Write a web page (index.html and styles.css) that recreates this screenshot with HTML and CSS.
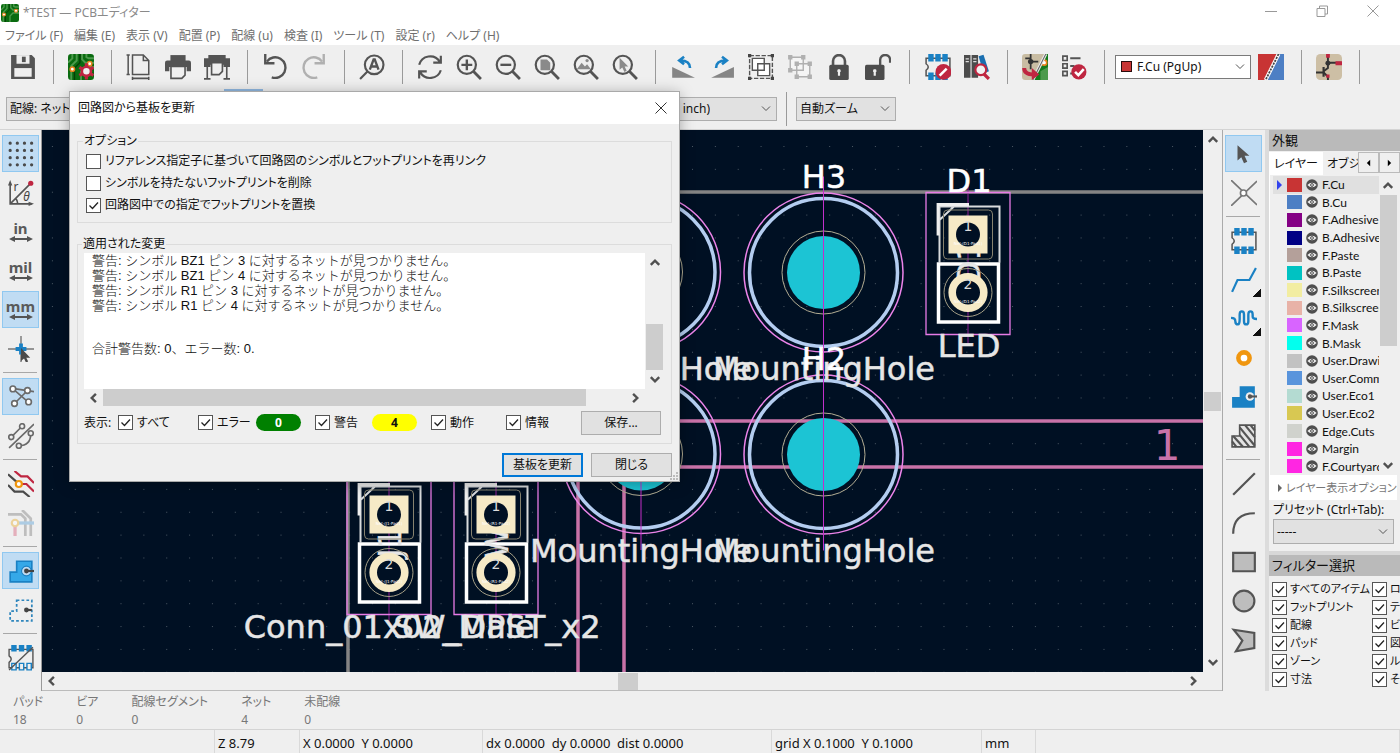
FILE: index.html
```html
<!DOCTYPE html>
<html lang="ja">
<head>
  <meta charset="UTF-8">
  <meta name="viewport" content="width=device-width, initial-scale=1.0">
  <title>*TEST — PCBエディター</title>
  <link rel="stylesheet" href="styles.css">
</head>
<body>
  <!-- shared symbols -->
  <svg class="defs" aria-hidden="true">
    <symbol id="board" viewBox="0 0 24 24">
      <rect width="24" height="24" rx="3" fill="#0a6b10"/>
      <path d="M8 0v6l-5 5v13M13 0v5l3 3h8M17 0v3l2 1h5M24 12h-8l-4 4v8M0 8l4-4V0" fill="none" stroke="#4c9a4c" stroke-width="1.8"/>
      <path d="M11 0v8l-5 5v11" fill="none" stroke="#053d08" stroke-width="1.2"/>
      <circle cx="4" cy="14" r="2" fill="#fff" stroke="#e8821c" stroke-width="1.4"/>
      <circle cx="20" cy="9" r="2" fill="#fff" stroke="#e8821c" stroke-width="1.4"/>
    </symbol>
    <symbol id="lens" viewBox="0 0 24 24">
      <circle cx="10" cy="10" r="8.4" fill="none" stroke="#545454" stroke-width="2"/>
      <path d="M16 16l7 7" stroke="#545454" stroke-width="2.6"/>
    </symbol>
    <symbol id="eye" viewBox="0 0 12 12">
      <circle cx="6" cy="6" r="5.8" fill="#4e4e4e"/>
      <path d="M1.4 6Q6 1.6 10.600 6Q6 10.400 1.4 6z" fill="#f0f0f0"/>
      <circle cx="6" cy="6" r="1.400" fill="#f0f0f0" stroke="#4e4e4e"/>
    </symbol>
    <symbol id="span" viewBox="0 0 24 6">
      <path d="M4 3h16" stroke="#545454" stroke-width="2"/>
      <path d="M0 3l6-3v6zM24 3l-6-3v6z" fill="#545454"/>
    </symbol>
    <symbol id="chip" viewBox="0 0 24 24">
      <path d="M1 4h22v16H1v-5q4-3 0-6z" fill="none" stroke="#545454" stroke-width="1.400"/>
      <path d="M3 0h5v7H3zM9.500 0h5v7h-5zM16 0h5v7h-5zM3 17h5v7H3zM9.500 17h5v7h-5zM16 17h5v7h-5z" fill="#1a81c4"/>
    </symbol>
    <symbol id="arrow" viewBox="0 0 24 24">
      <path d="M6 4v14l3.500-3 2.500 5.500 3-1.400-2.500-5.400H17z" fill="#545454"/>
    </symbol>
    <symbol id="chev" viewBox="0 0 10 10">
      <path d="M1.500 3L5 6.500 8.500 3" fill="none" stroke="#505050" stroke-width="2"/>
    </symbol>
  </svg>

  <div class="app">
    <header class="titlebar">
      <svg class="app-icon"><use href="#board"/></svg>
      <h1>*TEST — PCBエディター</h1>
      <div class="window-buttons">
        <button aria-label="最小化"><svg viewBox="0 0 12 12"><path d="M0 6.500h12"/></svg></button>
        <button aria-label="元に戻す"><svg viewBox="0 0 12 12"><path d="M1 3.500h8v8H1zM3.500 3.500V1h8v8H9"/></svg></button>
        <button aria-label="ウィンドウを閉じる"><svg viewBox="0 0 12 12"><path d="M.5.5l11 11M11.500.5l-11 11"/></svg></button>
      </div>
    </header>

    <nav class="menubar">
      <a href="#file">ファイル (F)</a>
      <a href="#edit">編集 (E)</a>
      <a href="#view">表示 (V)</a>
      <a href="#place">配置 (P)</a>
      <a href="#route">配線 (u)</a>
      <a href="#inspect">検査 (I)</a>
      <a href="#tools">ツール (T)</a>
      <a href="#prefs">設定 (r)</a>
      <a href="#help">ヘルプ (H)</a>
    </nav>

    <div class="toolbar">
      <button class="tool" aria-label="保存"><svg viewBox="0 0 24 24"><path d="M1 1h19l3 3v19H1z" fill="#545454"/><path d="M6 1h12v8H6z" fill="#efefef"/><path d="M11 2.500h3.500v5H11z" fill="#545454"/><path d="M4 13h16v8H4z" fill="#efefef"/></svg></button>
      <span class="sep"></span>
      <button class="tool" aria-label="基板の設定"><svg viewBox="0 0 24 24"><use href="#board"/><path d="M17 8.500v15M10.500 12.300l13 7.500M10.500 19.800l13-7.500" stroke="#bf2641" stroke-width="3"/><circle cx="17" cy="16" r="4.200" fill="#efefef" stroke="#bf2641" stroke-width="2.400"/></svg></button>
      <span class="sep"></span>
      <button class="tool" aria-label="ページ設定"><svg viewBox="0 0 24 24" fill="none" stroke="#545454" stroke-width="1.400"><path d="M6 1h10l5 5v13H6zM16 1v5h5"/><path d="M2 1v18M.5 1h3M.5 19h3M6 22.500h15M6 21v3M21 21v3"/></svg></button>
      <button class="tool" aria-label="印刷"><svg viewBox="0 0 24 24"><path d="M5 1h14v6H5z" fill="#545454"/><path d="M0 8q0-2 2-2h20q2 0 2 2v8h-4v-4H4v4H0z" fill="#545454"/><path d="M5.500 11.500h13v8l-3 3h-10z" fill="#efefef" stroke="#545454" stroke-width="1.500"/></svg></button>
      <button class="tool" aria-label="プロット"><svg viewBox="0 0 24 24"><path d="M4 1h16v3h4v8h-6v-2H6v2H0V4h4z" fill="#545454"/><path d="M7 8h10v8l-3 3H7z" fill="#efefef" stroke="#545454" stroke-width="1.500"/><path d="M3 11v12M21 11v12M0 23h6M18 23h6" stroke="#545454" stroke-width="1.500"/></svg></button>
      <span class="sep"></span>
      <button class="tool" aria-label="元に戻す操作"><svg viewBox="0 0 24 24"><path d="M4.500 7A9.500 9.500 0 1 1 9 21.500" fill="none" stroke="#545454" stroke-width="2.200"/><path d="M3 0v8.500h8.500" fill="none" stroke="#545454" stroke-width="2.200"/></svg></button>
      <button class="tool faded" aria-label="やり直し"><svg viewBox="0 0 24 24"><path d="M19.500 7A9.500 9.500 0 1 0 15 21.500" fill="none" stroke="#545454" stroke-width="2.200"/><path d="M21 0v8.500h-8.500" fill="none" stroke="#545454" stroke-width="2.200"/></svg></button>
      <span class="sep"></span>
      <button class="tool" aria-label="検索"><svg viewBox="0 0 24 24"><g fill="none" stroke="#545454" stroke-width="2"><circle cx="14" cy="10" r="8.600"/><path d="M8 16l-7 7"/><path d="M10 14.500L13.500 5h1L18 14.500M11 11.500h6" stroke-width="2.200"/></g></svg></button>
      <span class="sep"></span>
      <button class="tool" aria-label="再描画"><svg viewBox="0 0 24 24" fill="none" stroke="#545454" stroke-width="2"><path d="M2 10a10.500 10.500 0 0 1 19-3M22 1.500V8h-7M22 15a10.500 10.500 0 0 1-19 2M2 22.500V16h7"/></svg></button>
      <button class="tool" aria-label="拡大"><svg viewBox="0 0 24 24"><use href="#lens"/><path d="M5 10h10M10 5v10" stroke="#545454" stroke-width="2.200"/></svg></button>
      <button class="tool" aria-label="縮小"><svg viewBox="0 0 24 24"><use href="#lens"/><path d="M5 10h10" stroke="#545454" stroke-width="2.200"/></svg></button>
      <button class="tool" aria-label="ページに合わせる"><svg viewBox="0 0 24 24"><path d="M6 5h6l3 3v7H6z" fill="#8a8a8a"/><use href="#lens"/></svg></button>
      <button class="tool" aria-label="全体を表示"><svg viewBox="0 0 24 24"><path d="M3.500 14l4.500-6 3 3.500 2-2 3.500 4.500z" fill="#8a8a8a"/><circle cx="13" cy="6" r="1.500" fill="#8a8a8a"/><use href="#lens"/></svg></button>
      <button class="tool" aria-label="選択部を拡大"><svg viewBox="0 0 24 24"><path d="M7 3.500v11l2.500-2 2 4 2-1-1.800-4H15z" fill="#8a8a8a"/><use href="#lens"/></svg></button>
      <span class="sep"></span>
      <button class="tool" aria-label="反時計回りに回転"><svg viewBox="0 0 24 24"><path d="M2 12v10h21z" fill="#858585"/><path d="M18.500 13q0-7-9-7M13 2.500L8.500 6 13 9.500" fill="none" stroke="#1a81c4" stroke-width="2.400"/></svg></button>
      <button class="tool" aria-label="時計回りに回転"><svg viewBox="0 0 24 24"><path d="M23 12v10H2z" fill="#858585"/><path d="M6.500 13q0-7 9-7M12 2.500L16.500 6 12 9.500" fill="none" stroke="#1a81c4" stroke-width="2.400"/></svg></button>
      <button class="tool" aria-label="グループ化"><svg viewBox="0 0 24 24"><path d="M1.500 1.500h21v21h-21z" fill="none" stroke="#545454" stroke-width="1.300" stroke-dasharray="4 1.500"/><path d="M0 0h3v3H0zM21 0h3v3h-3zM0 21h3v3H0zM21 21h3v3h-3z" fill="#444"/><path d="M4 4h11v11H4zM9 9h11v11H9z" fill="#fff" stroke="#545454" stroke-width="1.300"/></svg></button>
      <button class="tool faded" aria-label="グループ解除"><svg viewBox="0 0 24 24"><path d="M3 3h12v12H3zM9 9h12v12H9z" fill="#fff" stroke="#545454" stroke-width="1.300"/><path d="M1 1h4v4H1zM13 1h4v4h-4zM1 13h4v4H1zM7 7h4v4H7zM19 7h4v4h-4zM7 19h4v4H7zM19 19h4v4h-4z" fill="#545454"/></svg></button>
      <button class="tool" aria-label="ロック"><svg viewBox="0 0 24 24"><path d="M6.500 11V6.500a5.500 5.500 0 0 1 11 0V11" fill="none" stroke="#545454" stroke-width="2.400"/><rect x="3" y="10" width="18" height="14" rx="1.500" fill="#4c4c4c"/><path d="M12 14v6M10.500 15.500h3" stroke="#efefef" stroke-width="2"/></svg></button>
      <button class="tool" aria-label="ロック解除"><svg viewBox="0 0 24 24"><path d="M14 11V5.500a4.600 4.600 0 0 1 9.200 0V8" fill="none" stroke="#545454" stroke-width="2.200"/><rect x="0" y="10" width="18" height="14" rx="1.500" fill="#4c4c4c"/><path d="M9 14v6M7.500 15.500h3" stroke="#efefef" stroke-width="2"/></svg></button>
      <span class="sep sep-wide"></span>
      <button class="tool" aria-label="フットプリントエディター"><svg viewBox="0 0 24 24"><use href="#chip"/><circle cx="17" cy="16.500" r="7.300" fill="#bf2641"/><path d="M13.500 20l6.500-6.500" stroke="#fff" stroke-width="2.400"/></svg></button>
      <button class="tool" aria-label="ライブラリーブラウザー"><svg viewBox="0 0 24 24"><path d="M0 1h6v21H0zM7 1h6v21H7z" fill="#4c4c4c"/><path d="M1.500 4.500h3M1.500 7h3M8.500 4.500h3M8.500 7h3" stroke="#ddd"/><path d="M13.500 2l4.500-1.400L23 16l-5 2z" fill="#1a6fb0"/><path d="M18 18l5 5" stroke="#bf2641" stroke-width="3"/><circle cx="15.500" cy="14.500" r="5" fill="#f2f2f2" stroke="#bf2641" stroke-width="2"/></svg></button>
      <span class="sep"></span>
      <button class="tool" aria-label="回路図から基板を更新"><svg viewBox="0 0 24 24"><rect width="24" height="24" rx="3" fill="#c9bda3"/><path d="M22 0h2v24H9z" fill="#147a1c"/><path d="M24 12l-7 4v8h7z" fill="#4c9a4c"/><circle cx="20.500" cy="8" r="2.300" fill="#fff" stroke="#e8821c" stroke-width="1.500"/><path d="M8 0v14M8 7h7M3 4h5" stroke="#333" stroke-width="1.600"/><circle cx="8" cy="7" r="2.500" fill="#333"/><path d="M22 0L10 24" stroke="#eee" stroke-width="2.800"/><path d="M22 0L10 24" stroke="#666" stroke-width="1"/><path d="M2 13q0 6 9 6" fill="none" stroke="#bf2641" stroke-width="3.600"/><path d="M9 13l7 6-7 5z" fill="#bf2641"/></svg></button>
      <button class="tool" aria-label="DRCを実行"><svg viewBox="0 0 24 24"><path d="M1.700 2h4v4h-4zM1.700 9h4v4h-4zM1.700 16h4v4h-4z" fill="none" stroke="#545454" stroke-width="1.500"/><path d="M8.500 4H18M8.500 11h4M8.500 18h2" stroke="#545454" stroke-width="1.800"/><circle cx="16.500" cy="16.500" r="7" fill="#bf2641"/><path d="M13 16.500l3 3 5-5.500" fill="none" stroke="#fff" stroke-width="2.400"/></svg></button>
      <span class="sep"></span>
      <div class="layer-pick">
        <span class="layer-chip"></span>
        <select class="combo combo-white" aria-label="作業レイヤー"><option>F.Cu (PgUp)</option></select>
      </div>
      <button class="tool" aria-label="レイヤーペア"><svg viewBox="0 0 24 24"><path d="M0 0h24v24H0z" fill="#4d7fc4"/><path d="M0 0h19L7 24H0z" fill="#c83434"/><path d="M19 0L7 24" stroke="#fff" stroke-width="3.500"/><path d="M19 0L7 24" stroke="#444" stroke-width="1.600" stroke-dasharray="2 1"/></svg></button>
      <span class="sep"></span>
      <button class="tool" aria-label="スクリプトコンソール"><svg viewBox="0 0 24 24"><rect width="24" height="24" rx="4" fill="#cdbfa5"/><path d="M11 0v13l-4 3M11 8h12M0 17h7l4 4v3" fill="none" stroke="#333" stroke-width="1.800"/><path d="M7 12v9" stroke="#333" stroke-width="2"/><circle cx="11" cy="8.500" r="2.300" fill="#333"/><path d="M9.300 0h3.500v3.500H9.300zM18 6.800h6v3.500h-6zM9.500 19h3v3h-3z" fill="#bf2641"/></svg></button>
      <span class="sep"></span>
    </div>

    <div class="optionbar">
      <select class="combo combo-track" aria-label="配線幅"><option>配線: ネットクラスの幅を使用</option></select>
      <button class="tool on" aria-label="自動配線幅"></button>
      <select class="combo combo-grid" aria-label="グリッド"><option>2.5400 mm (0.1000 inch)</option></select>
      <span class="sep"></span>
      <select class="combo combo-zoom" aria-label="ズーム"><option>自動ズーム</option></select>
    </div>

    <main class="workspace">
      <div class="side side-left">
        <button class="tool on" aria-label="グリッドを表示"><svg viewBox="0 0 24 24"><path d="M2 2h21M2 8.700h21M2 15.400h21M2 22h21" stroke="#4a4a4a" stroke-width="3" stroke-linecap="round" stroke-dasharray="0 6.600"/></svg></button>
        <button class="tool" aria-label="極座標"><svg viewBox="0 0 24 24"><path d="M2 3v19h20M2 22L20 4M7 17q2 2 2 5" fill="none" stroke="#545454" stroke-width="1.500"/><path d="M0 5l2-5 2 5zM19 20l5 2-5 2z" fill="#545454"/><circle cx="21" cy="3" r="2.400" fill="#bf2641"/><text class="glyph" x="5" y="10">r</text><text class="glyph glyph-it" x="14" y="19">θ</text></svg></button>
        <button class="tool unit" aria-label="インチ単位"><span>in</span><svg><use href="#span"/></svg></button>
        <button class="tool unit" aria-label="ミル単位"><span>mil</span><svg><use href="#span"/></svg></button>
        <button class="tool unit on" aria-label="ミリメートル単位"><span>mm</span><svg><use href="#span"/></svg></button>
        <button class="tool" aria-label="カーソル形状"><svg viewBox="0 0 24 24"><path d="M0 12h24M12 0v24" stroke="#777" stroke-width="1.300"/><path d="M7 12h10M12 7v10" stroke="#1a81c4" stroke-width="3.500"/><path d="M12 11v12l2.800-2.200 1.800 3.700 2-1-1.700-3.500h3.600z" fill="#4a4a4a"/></svg></button>
        <span class="rule"></span>
        <button class="tool on" aria-label="ラッツネスト"><svg viewBox="0 0 24 24"><g fill="none" stroke="#6a6a6a" stroke-width="1.500"><path d="M4 4l15 13M6 18L18 6M4 4l20 3"/><g fill="#fff"><circle cx="4.500" cy="4.500" r="2.600"/><circle cx="18" cy="6" r="2.600"/><circle cx="6" cy="18" r="2.600"/><circle cx="19" cy="16.500" r="2.600"/></g></g></svg></button>
        <button class="tool" aria-label="曲線ラッツネスト"><svg viewBox="0 0 24 24"><g fill="none" stroke="#6a6a6a" stroke-width="1.500"><path d="M1 23L24 1M3 13L13 3M10 21q11 0 11-11"/><g fill="#efefef"><circle cx="3" cy="13" r="2.300"/><circle cx="13" cy="3" r="2.300"/><circle cx="10" cy="21" r="2.300"/><circle cx="21" cy="9.500" r="2.300"/></g></g></svg></button>
        <span class="rule"></span>
        <button class="tool" aria-label="ネットハイライト"><svg viewBox="0 0 24 24"><path d="M0 3l9 8M0 13l6 6h8l6 5" fill="none" stroke="#4a4a4a" stroke-width="2"/><path d="M6 0l6 5h6l6 6M12 12h5l7 7" fill="none" stroke="#bf2641" stroke-width="2"/><circle cx="10" cy="12" r="2.800" fill="#fff" stroke="#f0960f" stroke-width="2"/></svg></button>
        <button class="tool faded" aria-label="コントラスト"><svg viewBox="0 0 24 24"><path d="M0 4h12l4 4v16M13 0l8 8v16" fill="none" stroke="#777" stroke-width="2.500"/><path d="M8 12h16" stroke="#4c9ad4" stroke-width="3"/><path d="M6.500 13v11" stroke="#d45070" stroke-width="3"/><circle cx="6.500" cy="12" r="3" fill="#fff" stroke="#e8a81c" stroke-width="2"/></svg></button>
        <span class="rule"></span>
        <button class="tool on" aria-label="ゾーン塗りつぶし"><svg viewBox="0 0 24 24"><path d="M8 3h14v19H2V13h6z" fill="#35a8e8" stroke="#1a81c4" stroke-width="1.500"/><circle cx="17" cy="12" r="4.500" fill="#c0dcf3" stroke="#1a81c4"/><path d="M16 12h8" stroke="#444" stroke-width="2"/><circle cx="17" cy="12" r="2.200" fill="#444"/></svg></button>
        <button class="tool" aria-label="ゾーン外形"><svg viewBox="0 0 24 24"><path d="M8 3h14v19H2V13h6z" fill="none" stroke="#2f86bd" stroke-width="1.600" stroke-dasharray="2.500 2"/><path d="M16 12h6" stroke="#444" stroke-width="2"/><circle cx="17" cy="12" r="2.200" fill="#444"/></svg></button>
        <span class="rule"></span>
        <button class="tool" aria-label="パッド表示"><svg viewBox="0 0 24 24"><path d="M1 4h22v17H1v-5q4-3 0-6z" fill="none" stroke="#545454" stroke-width="1.300"/><path d="M3 0h5v6H3zM10 0h5v6h-5zM17 0h5v6h-5z" fill="#1a81c4"/><path d="M3.500 17h4v6h-4zM10.500 17h4v6h-4zM17.500 17h4v6h-4z" fill="#efefef" stroke="#1a81c4" stroke-width="1.300"/><path d="M1 23L23 2" stroke="#545454" stroke-width="1.300"/></svg></button>
      </div>

      <div class="view">
        <svg class="board" viewBox="42 130 1161 542" preserveAspectRatio="xMidYMid slice">
          <defs>
            <pattern id="dots" x="692" y="146" width="22.860" height="22.860" patternUnits="userSpaceOnUse">
              <rect width="1" height="1" fill="#4b5763"/>
            </pattern>
            <g id="hole">
              <circle r="36.500" fill="#1cc4d4"/>
              <circle r="41.500" fill="none" stroke="#b3ad93"/>
              <circle r="74" fill="none" stroke="#b4cdf0" stroke-width="3.500"/>
              <circle r="79.500" fill="none" stroke="#ec84ea" stroke-width="1.500"/>
              <path d="M0-96V96" stroke="#c32fc9"/>
            </g>
            <g id="header-silk" fill="none">
              <path d="M0-54V110" stroke="#8f1f98"/>
              <path d="M-28.500 28V-28h60v56M-28-15l14-13" stroke="#d9dbdd" stroke-width="2"/>
              <path d="M-30 1v-31H1" stroke="#efefef" stroke-width="2.800"/>
              <path d="M-29.500 29.500h60v58h-60z" stroke="#fff" stroke-width="3.500"/>
            </g>
            <g id="header-pads">
              <rect x="-24.500" y="-24.500" width="49" height="49" rx="4" fill="none" stroke="#86826f"/>
              <circle cy="58" r="24" fill="none" stroke="#a59f86"/>
              <path d="M-19.500-19h39v38h-39z" fill="#f6eac6"/>
              <circle r="12" fill="#001023"/>
              <circle cy="58" r="15.800" fill="#001023" stroke="#f6eac6" stroke-width="7.600"/>
              <text class="pad-no" x="0" y="-4">1</text>
              <text class="pad-no" x="0" y="54">2</text>
              <path d="M-42-42h84v142h-84z" fill="none" stroke="#e77be6" stroke-width="1.300"/>
            </g>
          </defs>
          <rect x="-400" y="-300" width="2200" height="1400" fill="#001023"/>
          <rect x="-400" y="-300" width="2200" height="1400" fill="url(#dots)"/>
          <path d="M1900 192H348V1200" fill="none" stroke="#848484" stroke-width="3.500"/>
          <path d="M1900 421H578V1200M1900 467H624V1200" fill="none" stroke="#c872a8" stroke-width="3.500"/>
          <text class="dim" x="1167" y="460">1</text>

          <use href="#hole" x="641" y="272"/>
          <use href="#hole" x="641" y="454"/>
          <use href="#hole" x="823.500" y="272.500"/>
          <use href="#hole" x="823.500" y="454.500"/>

          <use href="#header-silk" x="968" y="234.500"/>
          <use href="#header-silk" x="389" y="514.500"/>
          <use href="#header-silk" x="496" y="514.500"/>
          <g class="silk">
            <text x="-263" y="980" transform="rotate(-90)">D1</text>
            <text x="-543" y="401" transform="rotate(-90)">J1</text>
            <text x="-543" y="508" transform="rotate(-90)">SW1</text>
          </g>
          <use href="#header-pads" x="968" y="234.500"/>
          <use href="#header-pads" x="389" y="514.500"/>
          <use href="#header-pads" x="496" y="514.500"/>
          <g class="net">
            <text x="968" y="245">Net-(D1-Pad1)</text>
            <text x="968" y="303">Net-(D1-Pad2)</text>
            <text x="389" y="525">Net-(J1-Pad1)</text>
            <text x="389" y="583">Net-(J1-Pad2)</text>
            <text x="496" y="525">Net-(R1-Pad1)</text>
            <text x="496" y="583">Net-(R1-Pad2)</text>
          </g>

          <g class="silk">
            <text x="641" y="380">MountingHole</text>
            <text x="824" y="380">MountingHole</text>
            <text x="641" y="562">MountingHole</text>
            <text x="824" y="562">MountingHole</text>
            <text x="969" y="357">LED</text>
            <text x="389" y="638">Conn_01x02_Male</text>
            <text x="497" y="638">SW_DPST_x2</text>
          </g>
          <g class="silk silk-ref">
            <text x="824" y="188">H3</text>
            <text x="824" y="370">H2</text>
            <text x="969" y="192">D1</text>
          </g>
        </svg>
        <div class="bar bar-v">
          <svg class="turn-up"><use href="#chev"/></svg><i class="pad"></i><i class="thumb"></i><i class="pad"></i><svg><use href="#chev"/></svg>
        </div>
        <div class="bar bar-h">
          <svg class="turn-left"><use href="#chev"/></svg><i class="pad"></i><i class="thumb"></i><i class="pad"></i><svg class="turn-right"><use href="#chev"/></svg>
        </div>
      </div>

      <div class="side side-right">
        <button class="tool on" aria-label="選択"><svg viewBox="0 0 24 24"><use href="#arrow"/></svg></button>
        <button class="tool" aria-label="ローカルラッツネスト"><svg viewBox="0 0 24 24"><path d="M0 0l24 23M24 1L0 24" stroke="#777" stroke-width="1.500"/><circle cx="11.500" cy="12" r="2.800" fill="#fff" stroke="#777" stroke-width="1.500"/></svg></button>
        <span class="rule"></span>
        <button class="tool" aria-label="フットプリントを追加"><svg><use href="#chip"/></svg></button>
        <button class="tool more" aria-label="配線"><svg viewBox="0 0 24 24"><path d="M1 23l5-11h11l6-11" fill="none" stroke="#1a81c4" stroke-width="2"/></svg></button>
        <button class="tool more" aria-label="配線長調整"><svg viewBox="0 0 24 24"><path d="M0 11q4 0 4 3t2.500 3Q8 17 8 12V8q0-3 2-3t2 3v6q0 3 2 3t2-3V8q0-3 2-3t2 3v2q0 2 4 2" fill="none" stroke="#1a81c4" stroke-width="2.200"/></svg></button>
        <button class="tool" aria-label="ビアを追加"><svg viewBox="0 0 24 24"><circle cx="12" cy="12" r="5.200" fill="#fff" stroke="#f0960f" stroke-width="4.200"/></svg></button>
        <button class="tool" aria-label="塗りつぶしゾーン"><svg viewBox="0 0 24 24"><path d="M8 2h14v20H1V12h7z" fill="#1a81c4"/><circle cx="17.500" cy="11.500" r="4" fill="#efefef"/><path d="M17 11.500h7" stroke="#545454" stroke-width="2"/><circle cx="17.500" cy="11.500" r="2" fill="#545454"/></svg></button>
        <button class="tool" aria-label="ルールエリア"><svg viewBox="0 0 24 24"><path d="M8 2h14v20H1V12h7z" fill="#e3e3e3" stroke="#545454" stroke-width="1.500"/><path d="M8 4l14 17M13 2l9 11M8 11l9 11M2 12l9 10M1 17l4 5M18 2l4 5" stroke="#545454" stroke-width="2"/></svg></button>
        <span class="rule"></span>
        <button class="tool" aria-label="線"><svg viewBox="0 0 24 24"><path d="M2 22L22 2" stroke="#545454" stroke-width="2"/></svg></button>
        <button class="tool" aria-label="円弧"><svg viewBox="0 0 24 24"><path d="M2 22Q2 3 22 3" fill="none" stroke="#545454" stroke-width="2"/></svg></button>
        <button class="tool" aria-label="矩形"><svg viewBox="0 0 24 24"><path d="M2 3.500h20v17H2z" fill="#bdbdbd" stroke="#545454" stroke-width="2"/></svg></button>
        <button class="tool" aria-label="円"><svg viewBox="0 0 24 24"><circle cx="12" cy="12" r="9.600" fill="#bdbdbd" stroke="#545454" stroke-width="2"/></svg></button>
        <button class="tool" aria-label="ポリゴン"><svg viewBox="0 0 24 24"><path d="M2.500 2.500l19 3v14l-17 3 6-10z" fill="#bdbdbd" stroke="#545454" stroke-width="2"/></svg></button>
      </div>

      <aside class="panel">
        <h2>外観</h2>
        <div class="tabs">
          <button class="tab active">レイヤー</button>
          <button class="tab">オブジェクト</button>
          <button class="step" aria-label="前のタブ"><svg viewBox="0 0 6 8"><path d="M5 0v8L1 4z"/></svg></button>
          <button class="step" aria-label="次のタブ"><svg viewBox="0 0 6 8"><path d="M1 0v8l4-4z"/></svg></button>
        </div>
        <div class="layer-box">
          <ul class="layers">
            <li class="current"><i class="sw f-cu"></i><svg><use href="#eye"/></svg>F.Cu</li>
            <li><i class="sw b-cu"></i><svg><use href="#eye"/></svg>B.Cu</li>
            <li><i class="sw f-adhesive"></i><svg><use href="#eye"/></svg>F.Adhesive</li>
            <li><i class="sw b-adhesive"></i><svg><use href="#eye"/></svg>B.Adhesive</li>
            <li><i class="sw f-paste"></i><svg><use href="#eye"/></svg>F.Paste</li>
            <li><i class="sw b-paste"></i><svg><use href="#eye"/></svg>B.Paste</li>
            <li><i class="sw f-silk"></i><svg><use href="#eye"/></svg>F.Silkscreen</li>
            <li><i class="sw b-silk"></i><svg><use href="#eye"/></svg>B.Silkscreen</li>
            <li><i class="sw f-mask"></i><svg><use href="#eye"/></svg>F.Mask</li>
            <li><i class="sw b-mask"></i><svg><use href="#eye"/></svg>B.Mask</li>
            <li><i class="sw drawings"></i><svg><use href="#eye"/></svg>User.Drawings</li>
            <li><i class="sw comments"></i><svg><use href="#eye"/></svg>User.Comments</li>
            <li><i class="sw eco1"></i><svg><use href="#eye"/></svg>User.Eco1</li>
            <li><i class="sw eco2"></i><svg><use href="#eye"/></svg>User.Eco2</li>
            <li><i class="sw edge"></i><svg><use href="#eye"/></svg>Edge.Cuts</li>
            <li><i class="sw margin"></i><svg><use href="#eye"/></svg>Margin</li>
            <li><i class="sw margin"></i><svg><use href="#eye"/></svg>F.Courtyard</li>
          </ul>
          <div class="bar bar-list">
            <svg class="turn-up"><use href="#chev"/></svg><i class="thumb"></i><i class="pad"></i><svg><use href="#chev"/></svg>
          </div>
        </div>
        <button class="fold"><svg viewBox="0 0 6 8"><path d="M1 0v8l4-4z"/></svg>レイヤー表示オプション</button>
        <div class="preset">
          <label for="preset">プリセット (Ctrl+Tab):</label>
          <select class="combo" id="preset"><option>-----</option></select>
        </div>
        <h2 class="filter-title">フィルター選択</h2>
        <div class="filters">
          <label><input type="checkbox" checked>すべてのアイテム</label>
          <label><input type="checkbox" checked>ロックされたアイテム</label>
          <label><input type="checkbox" checked>フットプリント</label>
          <label><input type="checkbox" checked>テキスト</label>
          <label><input type="checkbox" checked>配線</label>
          <label><input type="checkbox" checked>ビア</label>
          <label><input type="checkbox" checked>パッド</label>
          <label><input type="checkbox" checked>図形</label>
          <label><input type="checkbox" checked>ゾーン</label>
          <label><input type="checkbox" checked>ルールエリア</label>
          <label><input type="checkbox" checked>寸法</label>
          <label><input type="checkbox" checked>その他のアイテム</label>
        </div>
      </aside>
    </main>

    <dl class="counts">
      <div><dt>パッド</dt><dd>18</dd></div>
      <div><dt>ビア</dt><dd>0</dd></div>
      <div><dt>配線セグメント</dt><dd>0</dd></div>
      <div><dt>ネット</dt><dd>4</dd></div>
      <div><dt>未配線</dt><dd>0</dd></div>
    </dl>

    <footer class="status">
      <span></span>
      <span>Z 8.79</span>
      <span>X 0.0000&nbsp; Y 0.0000</span>
      <span>dx 0.0000&nbsp; dy 0.0000&nbsp; dist 0.0000</span>
      <span>grid X 0.1000&nbsp; Y 0.1000</span>
      <span>mm</span>
      <span></span>
    </footer>
  </div>

  <section class="dialog" role="dialog" aria-labelledby="dialog-title">
    <header class="dialog-head">
      <h2 id="dialog-title">回路図から基板を更新</h2>
      <button aria-label="ダイアログを閉じる"><svg viewBox="0 0 12 12"><path d="M.5.5l11 11M11.500.5l-11 11"/></svg></button>
    </header>
    <div class="dialog-body">
      <fieldset class="options">
        <legend>オプション</legend>
        <label><input type="checkbox">リファレンス指定子に基づいて回路図のシンボルとフットプリントを再リンク</label>
        <label><input type="checkbox">シンボルを持たないフットプリントを削除</label>
        <label><input type="checkbox" checked>回路図中での指定でフットプリントを置換</label>
      </fieldset>
      <fieldset class="changes">
        <legend>適用された変更</legend>
        <div class="report">
          <div class="log">
            <p>警告: シンボル BZ1 ピン 3 に対するネットが見つかりません。</p>
            <p>警告: シンボル BZ1 ピン 4 に対するネットが見つかりません。</p>
            <p>警告: シンボル R1 ピン 3 に対するネットが見つかりません。</p>
            <p>警告: シンボル R1 ピン 4 に対するネットが見つかりません。</p>
            <p class="total">合計警告数: 0、エラー数: 0.</p>
          </div>
          <div class="bar bar-log">
            <svg class="turn-up"><use href="#chev"/></svg><i class="pad"></i><i class="thumb"></i><svg><use href="#chev"/></svg>
          </div>
          <div class="bar bar-log-h">
            <svg class="turn-left"><use href="#chev"/></svg><i class="thumb"></i><i class="pad"></i><svg class="turn-right"><use href="#chev"/></svg>
          </div>
        </div>
        <div class="show">
          <span>表示:</span>
          <label><input type="checkbox" checked>すべて</label>
          <label><input type="checkbox" checked>エラー</label>
          <b class="badge badge-green">0</b>
          <label><input type="checkbox" checked>警告</label>
          <b class="badge badge-yellow">4</b>
          <label><input type="checkbox" checked>動作</label>
          <label><input type="checkbox" checked>情報</label>
          <button class="btn">保存...</button>
        </div>
      </fieldset>
      <div class="actions">
        <button class="btn btn-main">基板を更新</button>
        <button class="btn">閉じる</button>
      </div>
    </div>
    <svg class="grip" viewBox="0 0 9 9"><path d="M6 0h2v2H6zM3 3h2v2H3zM6 3h2v2H6zM0 6h2v2H0zM3 6h2v2H3zM6 6h2v2H6z"/></svg>
  </section>
</body>
</html>
```

FILE: styles.css
```css
* {
    box-sizing: border-box;
}
body {
    margin: 0;
    font-family: "Noto Sans", "Noto Sans CJK JP", sans-serif;
    font-size: 12px;
    line-height: 18px;
    font-feature-settings: "palt";
    color: #111;
    background: #efefef;
    overflow: hidden;
}
h1, h2, p, ul, dl, dd {
    margin: 0;
    padding: 0;
    font-size: 12px;
    font-weight: normal;
}
button, select, input {
    font: inherit;
    color: inherit;
    font-feature-settings: inherit;
}
button {
    padding: 0;
    border: 0;
    background: none;
}
.defs {
    position: absolute;
    width: 0;
    height: 0;
}
.app {
    display: flex;
    flex-direction: column;
    height: 100vh;
}

/* title and menu */
.titlebar {
    display: flex;
    align-items: center;
    gap: 4px;
    height: 25px;
    padding-left: 1px;
    background: #fff;
    color: #8a8a8a;
}
.app-icon {
    width: 18px;
    height: 18px;
}
.window-buttons {
    display: flex;
    margin: 0 2px 0 auto;
}
.window-buttons button {
    width: 51px;
    height: 25px;
}
.window-buttons svg, .dialog-head svg {
    width: 12px;
    height: 12px;
    fill: none;
    stroke: #999;
}
.menubar {
    display: flex;
    gap: 11px;
    height: 20px;
    padding: 2px 5px;
    background: #fff;
}
.menubar a {
    color: #6f6f6f;
    text-decoration: none;
}

/* toolbars */
.toolbar {
    display: flex;
    align-items: center;
    height: 44px;
    padding-left: 3px;
}
.tool {
    display: flex;
    align-items: center;
    justify-content: center;
    flex: none;
    width: 39px;
    height: 37px;
    border: 1px solid transparent;
}
.tool svg {
    width: 26px;
    height: 26px;
}
.faded svg {
    opacity: 0.4;
}
.on {
    background: #c0dcf3;
    border-color: #90c8f0;
}
.sep {
    flex: none;
    width: 1px;
    height: 34px;
    margin: 0 7px 0 11px;
    background: #9a9a9a;
}
.sep-wide {
    margin: 0 8px 0 12px;
}
.combo {
    appearance: none;
    height: 24px;
    padding: 0 20px 0 3px;
    border: 1px solid #adadad;
    border-radius: 0;
    background: #e1e1e1 url("data:image/svg+xml,%3Csvg xmlns='http://www.w3.org/2000/svg' width='10' height='6'%3E%3Cpath d='M1 .5l4 4 4-4' fill='none' stroke='%23555'/%3E%3C/svg%3E") no-repeat right 5px center;
}
.layer-pick {
    position: relative;
    margin-left: 3px;
}
.layer-chip {
    position: absolute;
    left: 6px;
    top: 6px;
    width: 11px;
    height: 11px;
    border: 1px solid #2a0c0c;
    background: #c83434;
}
.combo-white {
    width: 136px;
    padding-left: 21px;
    border-color: #7a7a7a;
    background-color: #fff;
}
.optionbar {
    display: flex;
    align-items: center;
    height: 41px;
    padding: 0 6px;
    border-bottom: 1px solid #d4d4d4;
}
.optionbar .on {
    align-self: stretch;
    height: auto;
    margin-left: 18px;
    border-color: #90b8e0;
    border-width: 2px 1px;
}
.combo-track {
    width: 200px;
}
.combo-grid {
    width: 220px;
    margin-left: 294px;
    padding-right: 66px;
    text-align-last: right;
}
.optionbar .sep {
    margin: 0 9px;
}
.combo-zoom {
    width: 100px;
}

/* workspace */
.workspace {
    display: flex;
    flex: 1;
    min-height: 0;
}
.side {
    display: flex;
    flex-direction: column;
    gap: 2px;
    padding-top: 5px;
}
.side-left {
    width: 42px;
    padding-left: 2px;
    border-right: 1px solid #999;
}
.side-right {
    width: 47px;
    padding-left: 2px;
    border-left: 1px solid #aaa;
    border-right: 4px solid #dcdcdc;
}
.side .tool {
    width: 37px;
}
.rule {
    width: 35px;
    height: 7px;
    background: linear-gradient(#a8a8a8, #a8a8a8) no-repeat 1px 3px / 34px 1px;
}
.unit {
    flex-direction: column;
    font-size: 15px;
    font-weight: bold;
    line-height: 15px;
    color: #5a5a5a;
}
.unit svg {
    width: 24px;
    height: 6px;
}
.glyph {
    font-size: 11px;
    fill: #444;
}
.glyph-it {
    font-style: italic;
}
.more {
    background: linear-gradient(135deg, transparent 50%, #111 50%) no-repeat right bottom / 8px 8px;
}
.view {
    display: grid;
    grid-template-columns: 1fr 19px;
    grid-template-rows: 1fr 18px;
    flex: 1;
    min-width: 0;
    border-bottom: 1px solid #bbb;
}
.board {
    width: 100%;
    height: 100%;
    min-height: 0;
    overflow: hidden;
    font-family: "DejaVu Sans", sans-serif;
    text-anchor: middle;
}
.silk {
    font-size: 32px;
    fill: #e6e6e6;
    stroke: #e6e6e6;
    stroke-width: 0.5px;
}
.silk-ref {
    fill: #fff;
    stroke: #fff;
}
.dim {
    font-size: 42px;
    fill: #c872a8;
}
.pad-no {
    font-size: 14px;
    fill: #dcdcdc;
}
.net {
    font-size: 4px;
    fill: #fff;
}

/* scroll bars */
.bar {
    display: flex;
    flex-direction: column;
    align-items: center;
    background: #efefef;
}
.bar svg {
    flex: none;
    width: 12px;
    height: 19px;
}
.pad {
    flex: 1;
}
.thumb {
    width: 17px;
    height: 19px;
    background: #cdcdcd;
}
.turn-up {
    transform: rotate(180deg);
}
.turn-left {
    transform: rotate(90deg);
}
.turn-right {
    transform: rotate(-90deg);
}
.bar-h, .bar-log-h {
    flex-direction: row;
}
.bar-h svg, .bar-log-h svg {
    width: 19px;
    height: 12px;
}
.bar-h .thumb {
    width: 20px;
    height: 17px;
}
.bar-h .thumb + .pad {
    flex-grow: 0.98;
}

/* right panel */
.panel {
    display: flex;
    flex-direction: column;
    width: 131px;
    overflow: hidden;
}
.panel h2 {
    height: 21px;
    padding: 1px 3px;
    background: #bababa;
    font-size: 13px;
}
.tabs {
    display: flex;
    height: 24px;
    padding-top: 1px;
}
.tab {
    flex: none;
    width: 54px;
    padding: 0 5px;
    overflow: hidden;
    white-space: nowrap;
    text-align: left;
}
.tab + .tab {
    width: 35px;
    padding: 0 0 0 4px;
}
.active {
    background: #fff;
}
.step {
    flex: none;
    width: 21px;
    height: 21px;
    border: 1px solid #bbb;
}
.step svg {
    width: 5px;
    height: 8px;
}
.layer-box {
    display: flex;
    flex: 1;
    min-height: 0;
    margin-right: 3px;
    padding: 1px 0 0 3px;
    border-left: 1px solid #fff;
}
.layers {
    display: grid;
    grid-auto-rows: 1fr;
    flex: 1;
    min-width: 0;
    list-style: none;
    font-family: Lato, "Noto Sans", sans-serif;
}
.layers li {
    display: flex;
    align-items: center;
    gap: 4px;
    padding-left: 14px;
    overflow: hidden;
    white-space: nowrap;
    line-height: 17px;
}
.layers .current {
    background: #e0e0e0;
}
.current::before {
    content: "";
    margin-left: -10px;
    border: 5px solid transparent;
    border-left-color: #3344ee;
    border-right-width: 0;
}
.current .sw {
    margin-left: 1px;
}
.layers li svg {
    flex: none;
    width: 12px;
    height: 12px;
}
.sw {
    flex: none;
    width: 15px;
    height: 14px;
}
.f-cu { background: #c83434; }
.b-cu { background: #4d7fc4; }
.f-adhesive { background: #840084; }
.b-adhesive { background: #000084; }
.f-paste { background: #b4a09a; }
.b-paste { background: #00c2c2; }
.f-silk { background: #f2eda1; }
.b-silk { background: #e8b2a7; }
.f-mask { background: #d864ff; }
.b-mask { background: #02ffee; }
.drawings { background: #c2c2c2; }
.comments { background: #5994dc; }
.eco1 { background: #b4dbd2; }
.eco2 { background: #d8c852; }
.edge { background: #d0d2cd; }
.margin { background: #ff26e2; }
.bar-list {
    width: 18px;
}
.bar-list .thumb {
    flex: 152;
}
.bar-list .pad {
    flex: 110;
}
.fold {
    display: flex;
    align-items: center;
    justify-content: flex-start;
    gap: 3px;
    height: 25px;
    margin-right: 3px;
    padding-left: 8px;
    background: #fff;
    color: #777;
    font-size: 11px;
    white-space: nowrap;
}
.fold svg {
    flex: none;
    width: 6px;
    height: 8px;
    fill: #666;
}
.preset {
    display: flex;
    flex-direction: column;
    padding: 1px 6px 7px 4px;
    border-bottom: 4px solid #d8d8d8;
}
.preset .combo {
    height: 25px;
}
.filters {
    display: grid;
    grid-template-columns: 100px 130px;
    padding: 4px 0 3px 3px;
    font-size: 11px;
}
label {
    display: flex;
    align-items: center;
    white-space: nowrap;
}
.filters label {
    gap: 3px;
    height: 18px;
}
input[type="checkbox"] {
    appearance: none;
    flex: none;
    width: 15px;
    height: 15px;
    margin: 0;
    border: 1px solid #555;
    background: #fff;
}
input[type="checkbox"]:checked {
    background: #fff url("data:image/svg+xml,%3Csvg xmlns='http://www.w3.org/2000/svg' width='13' height='13'%3E%3Cpath d='M2.500 6.500l3 3 5.500-6' fill='none' stroke='%23222' stroke-width='1.300'/%3E%3C/svg%3E") no-repeat center;
}

/* bottom bars */
.counts {
    display: flex;
    gap: 33px;
    height: 39px;
    padding: 2px 13px;
    border-bottom: 1px solid #d4d4d4;
    color: #777;
}
.status {
    display: grid;
    grid-template-columns: 215px 85px 183px 289px 210px 54px 1fr;
    height: 23px;
    font-size: 13px;
}
.status span {
    padding: 4px 3px 0;
    border-right: 1px solid #d9d9d9;
    white-space: pre;
}

/* dialog */
.dialog {
    position: absolute;
    left: 70px;
    top: 92px;
    width: 609px;
    background: #efefef;
    box-shadow: 0 0 0 1px #a9a9a9, 0 2px 14px rgba(0, 0, 0, 0.35);
}
.dialog-head {
    display: flex;
    align-items: center;
    justify-content: space-between;
    height: 32px;
    padding: 0 12px 0 8px;
    background: #fff;
}
.dialog-head svg {
    display: block;
    stroke: #333;
}
.dialog-body {
    padding: 8px 7px 4px;
}
fieldset {
    margin: 0;
    padding: 0 7px;
    border: 1px solid #dcdcdc;
}
legend {
    padding: 0 1px;
    margin-left: -2px;
}
.options {
    height: 91px;
}
.options label {
    gap: 4px;
    height: 22px;
    padding-left: 1px;
}
.changes {
    height: 209px;
    margin-top: 12px;
    padding: 0 6px;
}
.report {
    display: grid;
    grid-template-columns: 1fr 19px;
    grid-template-rows: 136px 17px;
    margin-right: 1px;
}
.log {
    padding: 0 8px;
    overflow: hidden;
    background: #fff;
    font-family: "Liberation Sans", "Noto Sans CJK JP", sans-serif;
    font-feature-settings: normal;
}
.log p {
    font-size: 13px;
    font-weight: 300;
    line-height: 15px;
    white-space: nowrap;
}
.log .total {
    margin-top: 28px;
}
.bar-log .pad {
    flex: 52;
}
.bar-log .thumb {
    flex: 46;
}
.bar-log-h svg {
    flex: none;
}
.bar-log-h .thumb {
    flex: 483;
    height: 17px;
}
.bar-log-h .pad {
    flex: 40;
}
.show {
    display: grid;
    grid-template-columns: 34px 80px 58px 59px 57px 59px 75px 75px 80px;
    align-items: center;
    height: 33px;
}
.show label {
    gap: 4px;
}
.badge {
    width: 45px;
    height: 17px;
    border-radius: 9px;
    text-align: center;
    line-height: 17px;
}
.badge-green {
    background: #008000;
    color: #fff;
}
.badge-yellow {
    background: #ff0;
}
.btn {
    height: 24px;
    border: 1px solid #adadad;
    background: #e1e1e1;
}
.actions {
    display: flex;
    justify-content: flex-end;
    gap: 8px;
    padding-top: 9px;
}
.actions .btn {
    width: 81px;
}
.actions .btn-main {
    border: 2px solid #0078d7;
}
.grip {
    position: absolute;
    right: 0;
    bottom: 0;
    width: 9px;
    height: 9px;
    fill: #bbb;
}
```
